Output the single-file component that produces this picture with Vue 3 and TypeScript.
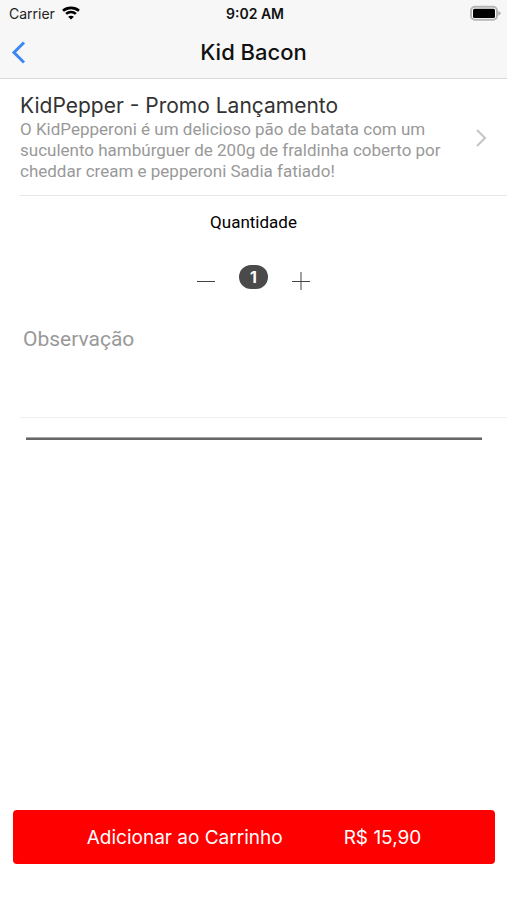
<script setup lang="ts">
import { computed, ref } from 'vue'

const unitPrice = 15.9
const quantity = ref(1)
const notes = ref('')

const total = computed(() => 'R$ ' + (unitPrice * quantity.value).toFixed(2).replace('.', ','))

function decrease(): void {
  if (quantity.value > 1) quantity.value -= 1
}

function increase(): void {
  quantity.value += 1
}
</script>

<template>
  <div class="screen">
    <header class="top">
      <div class="status">
        <div class="carrier">
          <span>Carrier</span>
          <svg class="wifi" width="18" height="14" viewBox="0 0 18 14" aria-hidden="true">
            <path d="M1 4.8C5.4 .9 12.6 .9 17 4.8" />
            <path d="M4.1 7.9C6.9 5.4 11.1 5.4 13.9 7.9" />
            <path class="dot" d="M9 13.6L6.1 10.7C7.7 9.3 10.3 9.3 11.9 10.7Z" />
          </svg>
        </div>
        <span class="clock">9:02 AM</span>
        <svg class="battery" width="31" height="16" viewBox="0 0 31 16" aria-hidden="true">
          <rect x="1" y="1.8" width="26" height="13" rx="4" fill="#fff" stroke="#b5b5b5" stroke-width="2" />
          <rect x="3" y="3.7" width="22" height="9.3" rx="1.5" fill="#000" />
          <path d="M28.4 5.7L31 8.3L28.4 10.9Z" fill="#a8a8a8" />
        </svg>
      </div>
      <nav class="bar">
        <button class="back" type="button" aria-label="Voltar">
          <svg width="16" height="24" viewBox="0 0 16 24" aria-hidden="true">
            <path d="M14 2.5L4 12.5L14 22.5" />
          </svg>
        </button>
        <h1>Kid Bacon</h1>
      </nav>
    </header>

    <main>
      <a class="product" href="#">
        <div class="details">
          <h2>KidPepper - Promo Lançamento</h2>
          <p>
            O KidPepperoni é um delicioso pão de batata com um suculento hambúrguer de 200g de
            fraldinha coberto por cheddar cream e pepperoni Sadia fatiado!
          </p>
        </div>
        <svg class="chevron" width="12" height="18" viewBox="0 0 12 18" aria-hidden="true">
          <path d="M2 1L10 9L2 17" />
        </svg>
      </a>

      <section class="quantity">
        <h3>Quantidade</h3>
        <div class="stepper">
          <button type="button" aria-label="Diminuir" @click="decrease">
            <svg width="18" height="18" viewBox="0 0 18 18" aria-hidden="true">
              <path d="M0 9.5H18" />
            </svg>
          </button>
          <output class="badge">{{ quantity }}</output>
          <button type="button" aria-label="Aumentar" @click="increase">
            <svg width="18" height="18" viewBox="0 0 18 18" aria-hidden="true">
              <path d="M0 9.5H18M9 0V18" />
            </svg>
          </button>
        </div>
      </section>

      <div class="notes">
        <textarea v-model="notes" placeholder="Observação" aria-label="Observação"></textarea>
      </div>
      <hr class="rule" />
    </main>

    <footer>
      <button class="add" type="button">
        <span>Adicionar ao Carrinho</span>
        <span>{{ total }}</span>
      </button>
    </footer>
  </div>
</template>

<style>
body {
  margin: 0;
  background: #fff;
}
</style>

<style scoped>
.screen {
  display: flex;
  flex-direction: column;
  box-sizing: border-box;
  min-height: 100vh;
  background: #fff;
  color: #000;
  font-family: Roboto, "Liberation Sans", sans-serif;
}

button {
  padding: 0;
  border: 0;
  background: none;
  cursor: pointer;
}

svg {
  display: block;
  fill: none;
}

h1,
h2,
h3,
p {
  margin: 0;
}

.top {
  background: #f7f7f7;
  border-bottom: 1px solid #d8d8d8;
}

.status {
  display: grid;
  grid-template-columns: 1fr auto 1fr;
  align-items: center;
  height: 26px;
  padding: 0 6px 0 9px;
  font-family: Inter, sans-serif;
  font-size: 14px;
}

.carrier {
  display: flex;
  align-items: center;
  gap: 7px;
  color: #222;
}

.wifi path {
  stroke: #000;
  stroke-width: 2.6;
}

.wifi .dot {
  fill: #000;
  stroke: none;
}

.clock {
  font-weight: 600;
  color: #111;
}

.battery {
  justify-self: end;
}

.bar {
  display: grid;
  grid-template-columns: 40px 1fr 40px;
  align-items: center;
  height: 52px;
}

.back {
  display: flex;
  align-items: center;
  height: 44px;
  padding-left: 10px;
}

.back path {
  stroke: #3f87f5;
  stroke-width: 3;
}

h1 {
  color: #111;
  font-family: Inter, sans-serif;
  font-size: 22px;
  font-weight: 500;
  line-height: 28px;
  text-align: center;
}

.product {
  display: flex;
  align-items: center;
  gap: 20px;
  margin-left: 20px;
  padding: 14px 20px 13px 0;
  border-bottom: 1px solid #e6e6e6;
  color: inherit;
  text-decoration: none;
}

.details {
  flex: 1;
}

h2 {
  color: #333;
  font-family: Inter, sans-serif;
  font-size: 21px;
  font-weight: 400;
  line-height: 26px;
}

.details p {
  color: #999;
  font-size: 17px;
  line-height: 21px;
}

.chevron path {
  stroke: #c4c4c4;
  stroke-width: 2;
}

.quantity {
  display: flex;
  flex-direction: column;
  align-items: center;
  gap: 32px;
  padding-top: 15px;
}

h3 {
  font-size: 17px;
  font-weight: 400;
  line-height: 22px;
}

.stepper {
  display: flex;
  align-items: flex-start;
  gap: 24px;
}

.stepper button {
  padding-top: 7px;
}

.stepper path {
  stroke: #444;
  stroke-width: 1;
}

.badge {
  min-width: 29px;
  border-radius: 12px;
  background: #4a4a4a;
  color: #fff;
  font-family: Inter, sans-serif;
  font-size: 16px;
  font-weight: 700;
  line-height: 24px;
  text-align: center;
}

.notes {
  margin: 32px 0 0 20px;
  border-bottom: 1px solid #f0f0f0;
}

textarea {
  display: block;
  box-sizing: border-box;
  width: 100%;
  height: 95px;
  padding: 5px 3px;
  border: 0;
  outline: 0;
  resize: none;
  background: none;
  color: #333;
  font-family: inherit;
  font-size: 21px;
  line-height: 24px;
}

textarea::placeholder {
  color: #999;
  opacity: 1;
}

.rule {
  height: 2px;
  margin: 19px 25px 0 26px;
  border: 0;
  border-top: 1px solid #a8a8a8;
  background: #666;
}

footer {
  margin-top: auto;
  padding: 20px 12px 36px 13px;
}

.add {
  display: flex;
  align-items: center;
  justify-content: center;
  gap: 61px;
  width: 100%;
  height: 54px;
  border-radius: 4px;
  background: #f00;
  color: #fff;
  font-family: Inter, sans-serif;
  font-size: 19px;
}
</style>
